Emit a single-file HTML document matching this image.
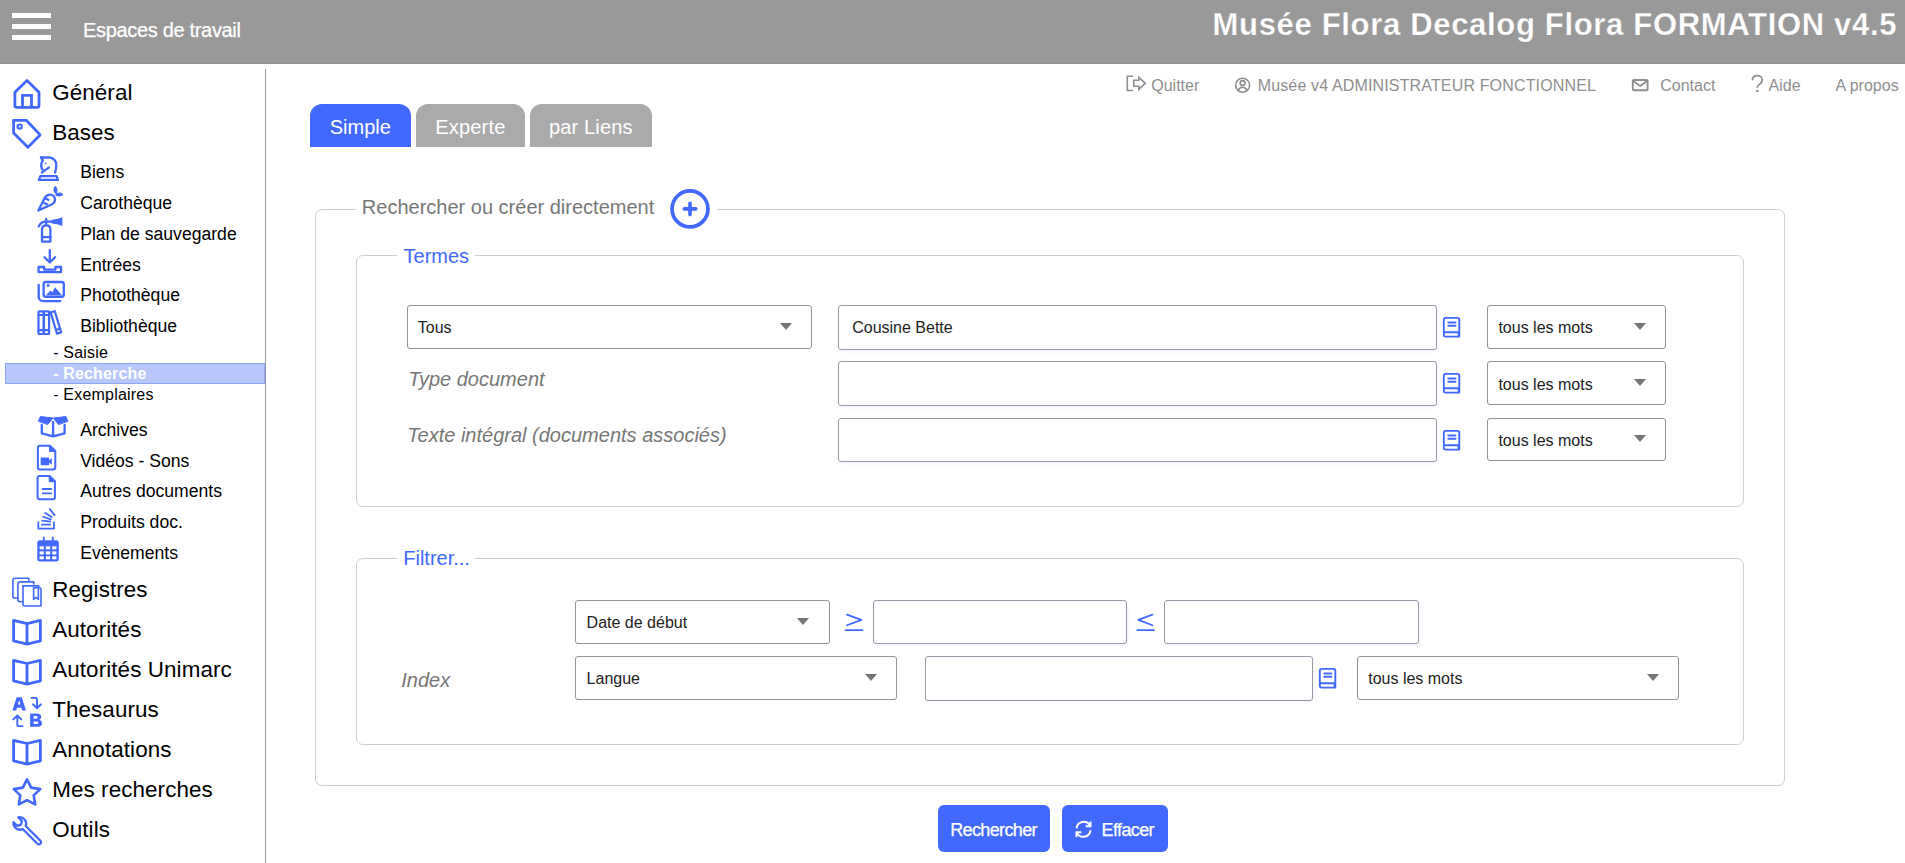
<!DOCTYPE html>
<html><head><meta charset="utf-8"><title>Recherche</title>
<style>
html,body{margin:0;padding:0;background:#fff;width:1905px;height:863px;overflow:hidden}
body{position:relative;font-family:"Liberation Sans",sans-serif}
.t{position:absolute;line-height:1;white-space:nowrap}
svg{position:absolute;left:0;top:0}
</style></head><body>
<div style="position:absolute;left:0px;top:0px;width:1905px;height:64px;box-sizing:border-box;background:#999;border-bottom:1px solid #909090"></div>
<div style="position:absolute;left:12px;top:13px;width:39px;height:5px;box-sizing:border-box;background:#fff"></div>
<div style="position:absolute;left:12px;top:24px;width:39px;height:5px;box-sizing:border-box;background:#fff"></div>
<div style="position:absolute;left:12px;top:35px;width:39px;height:5px;box-sizing:border-box;background:#fff"></div>
<div class="t" style="left:82.96px;top:20.00px;font-size:20px;color:#fff;letter-spacing:-0.32px;-webkit-text-stroke:0.25px #fff">Espaces de travail</div>
<div class="t" style="left:1212.53px;top:9.00px;font-size:31px;color:#fff;font-weight:bold;letter-spacing:0.68px;-webkit-text-stroke:0.25px #999">Musée Flora Decalog Flora FORMATION v4.5</div>
<div style="position:absolute;left:265px;top:69px;width:1px;height:794px;box-sizing:border-box;background:#9a9a9a"></div>
<div style="position:absolute;left:5px;top:363px;width:260px;height:21px;box-sizing:border-box;background:#b8c8fc;border:1px solid #8ba5fb"></div>
<div class="t" style="left:52.20px;top:82.00px;font-size:22.4px;color:#000;letter-spacing:0.1px">Général</div>
<div class="t" style="left:52.20px;top:122.00px;font-size:22.4px;color:#000;letter-spacing:0.1px">Bases</div>
<div class="t" style="left:52.20px;top:579.00px;font-size:22.4px;color:#000;letter-spacing:0.1px">Registres</div>
<div class="t" style="left:52.20px;top:619.00px;font-size:22.4px;color:#000;letter-spacing:0.1px">Autorités</div>
<div class="t" style="left:52.20px;top:659.00px;font-size:22.4px;color:#000;letter-spacing:0.1px">Autorités Unimarc</div>
<div class="t" style="left:52.20px;top:699.00px;font-size:22.4px;color:#000;letter-spacing:0.1px">Thesaurus</div>
<div class="t" style="left:52.20px;top:739.00px;font-size:22.4px;color:#000;letter-spacing:0.1px">Annotations</div>
<div class="t" style="left:52.20px;top:779.00px;font-size:22.4px;color:#000;letter-spacing:0.1px">Mes recherches</div>
<div class="t" style="left:52.20px;top:819.00px;font-size:22.4px;color:#000;letter-spacing:0.1px">Outils</div>
<div class="t" style="left:80.20px;top:164.00px;font-size:17.6px;color:#000;">Biens</div>
<div class="t" style="left:80.20px;top:195.00px;font-size:17.6px;color:#000;">Carothèque</div>
<div class="t" style="left:80.20px;top:226.00px;font-size:17.6px;color:#000;">Plan de sauvegarde</div>
<div class="t" style="left:80.20px;top:257.00px;font-size:17.6px;color:#000;">Entrées</div>
<div class="t" style="left:80.20px;top:287.00px;font-size:17.6px;color:#000;">Photothèque</div>
<div class="t" style="left:80.20px;top:318.00px;font-size:17.6px;color:#000;">Bibliothèque</div>
<div class="t" style="left:80.20px;top:422.00px;font-size:17.6px;color:#000;">Archives</div>
<div class="t" style="left:80.20px;top:453.00px;font-size:17.6px;color:#000;">Vidéos - Sons</div>
<div class="t" style="left:80.20px;top:483.00px;font-size:17.6px;color:#000;">Autres documents</div>
<div class="t" style="left:80.20px;top:514.00px;font-size:17.6px;color:#000;">Produits doc.</div>
<div class="t" style="left:80.20px;top:545.00px;font-size:17.6px;color:#000;">Evènements</div>
<div class="t" style="left:53.20px;top:345.00px;font-size:16px;color:#000;letter-spacing:0.2px">- Saisie</div>
<div class="t" style="left:53.20px;top:366.00px;font-size:16px;color:#fff;font-weight:bold;letter-spacing:0.15px">- Recherche</div>
<div class="t" style="left:53.20px;top:387.00px;font-size:16px;color:#000;letter-spacing:0.2px">- Exemplaires</div>
<div class="t" style="left:1151.24px;top:78.00px;font-size:16px;color:#8f8f8f;">Quitter</div>
<div class="t" style="left:1257.69px;top:78.00px;font-size:16px;color:#8f8f8f;letter-spacing:0.15px">Musée v4 ADMINISTRATEUR FONCTIONNEL</div>
<div class="t" style="left:1660.19px;top:78.00px;font-size:16px;color:#8f8f8f;">Contact</div>
<div class="t" style="left:1768.57px;top:78.00px;font-size:16px;color:#8f8f8f;">Aide</div>
<div class="t" style="left:1835.47px;top:78.00px;font-size:16px;color:#8f8f8f;">A propos</div>
<div style="position:absolute;left:310px;top:104px;width:101px;height:43px;box-sizing:border-box;background:#4169ff;border-radius:12px 12px 0 0"></div>
<div style="position:absolute;left:416px;top:104px;width:109px;height:43px;box-sizing:border-box;background:#aaa;border-radius:12px 12px 0 0"></div>
<div style="position:absolute;left:530px;top:104px;width:122px;height:43px;box-sizing:border-box;background:#aaa;border-radius:12px 12px 0 0"></div>
<div class="t" style="left:329.69px;top:117.00px;font-size:20px;color:#fff;">Simple</div>
<div class="t" style="left:435.16px;top:117.00px;font-size:20px;color:#fff;letter-spacing:0.2px">Experte</div>
<div class="t" style="left:549.01px;top:117.00px;font-size:20px;color:#fff;letter-spacing:0.15px">par Liens</div>
<div style="position:absolute;left:315px;top:209px;width:1470px;height:577px;box-sizing:border-box;border:1px solid #cfcfcf;border-radius:7px;background:transparent"></div>
<div style="position:absolute;left:356px;top:199px;width:7px;height:20px;box-sizing:border-box;background:#fff"></div>
<div style="position:absolute;left:356px;top:199px;width:361px;height:20px;background:#fff"></div>
<div class="t" style="left:361.86px;top:197.00px;font-size:20px;color:#777;">Rechercher ou créer directement</div>
<div style="position:absolute;left:356px;top:255px;width:1388px;height:252px;box-sizing:border-box;border:1px solid #cfcfcf;border-radius:7px;background:transparent"></div>
<div style="position:absolute;left:397px;top:245px;width:78px;height:20px;background:#fff"></div>
<div class="t" style="left:403.55px;top:246.00px;font-size:20px;color:#4169ff;">Termes</div>
<div style="position:absolute;left:356px;top:558px;width:1388px;height:187px;box-sizing:border-box;border:1px solid #cfcfcf;border-radius:7px;background:transparent"></div>
<div style="position:absolute;left:397px;top:548px;width:78px;height:20px;background:#fff"></div>
<div class="t" style="left:403.26px;top:548.00px;font-size:20px;color:#4169ff;">Filtrer...</div>
<div style="position:absolute;left:407px;top:305px;width:405px;height:44px;box-sizing:border-box;border:1px solid #949494;border-radius:3px;background:#fff"></div>
<div class="t" style="left:417.80px;top:320.00px;font-size:16px;color:#222;">Tous</div>
<div style="position:absolute;left:780px;top:322.5px;width:0;height:0;border-left:6px solid transparent;border-right:6px solid transparent;border-top:7px solid #777"></div>
<div style="position:absolute;left:838px;top:305px;width:599px;height:45px;box-sizing:border-box;border:1px solid #9898a6;border-radius:3px;background:#fff;box-shadow:1px 2px 3px rgba(120,120,200,0.08)"></div>
<div class="t" style="left:852.20px;top:320.00px;font-size:16px;color:#222;">Cousine Bette</div>
<div style="position:absolute;left:838px;top:361px;width:599px;height:45px;box-sizing:border-box;border:1px solid #9898a6;border-radius:3px;background:#fff;box-shadow:1px 2px 3px rgba(120,120,200,0.08)"></div>
<div style="position:absolute;left:838px;top:418px;width:599px;height:44px;box-sizing:border-box;border:1px solid #9898a6;border-radius:3px;background:#fff;box-shadow:1px 2px 3px rgba(120,120,200,0.08)"></div>
<div style="position:absolute;left:1487px;top:305px;width:179px;height:44px;box-sizing:border-box;border:1px solid #949494;border-radius:3px;background:#fff"></div>
<div class="t" style="left:1498.40px;top:320.00px;font-size:16px;color:#222;">tous les mots</div>
<div style="position:absolute;left:1634px;top:322.5px;width:0;height:0;border-left:6px solid transparent;border-right:6px solid transparent;border-top:7px solid #777"></div>
<div style="position:absolute;left:1487px;top:361px;width:179px;height:44px;box-sizing:border-box;border:1px solid #949494;border-radius:3px;background:#fff"></div>
<div class="t" style="left:1498.40px;top:377.00px;font-size:16px;color:#222;">tous les mots</div>
<div style="position:absolute;left:1634px;top:378.5px;width:0;height:0;border-left:6px solid transparent;border-right:6px solid transparent;border-top:7px solid #777"></div>
<div style="position:absolute;left:1487px;top:418px;width:179px;height:43px;box-sizing:border-box;border:1px solid #949494;border-radius:3px;background:#fff"></div>
<div class="t" style="left:1498.40px;top:433.00px;font-size:16px;color:#222;">tous les mots</div>
<div style="position:absolute;left:1634px;top:435.0px;width:0;height:0;border-left:6px solid transparent;border-right:6px solid transparent;border-top:7px solid #777"></div>
<div class="t" style="left:408.20px;top:369.00px;font-size:20px;color:#777;font-style:italic;">Type document</div>
<div class="t" style="left:407.20px;top:425.00px;font-size:20px;color:#777;font-style:italic;">Texte intégral (documents associés)</div>
<div style="position:absolute;left:575px;top:600px;width:255px;height:44px;box-sizing:border-box;border:1px solid #949494;border-radius:3px;background:#fff"></div>
<div class="t" style="left:586.60px;top:615.00px;font-size:16px;color:#222;">Date de début</div>
<div style="position:absolute;left:797px;top:617.5px;width:0;height:0;border-left:6px solid transparent;border-right:6px solid transparent;border-top:7px solid #777"></div>
<div style="position:absolute;left:873px;top:600px;width:254px;height:44px;box-sizing:border-box;border:1px solid #9898a6;border-radius:3px;background:#fff;box-shadow:1px 2px 3px rgba(120,120,200,0.08)"></div>
<div style="position:absolute;left:1164px;top:600px;width:255px;height:44px;box-sizing:border-box;border:1px solid #9898a6;border-radius:3px;background:#fff;box-shadow:1px 2px 3px rgba(120,120,200,0.08)"></div>
<div style="position:absolute;left:575px;top:656px;width:322px;height:44px;box-sizing:border-box;border:1px solid #949494;border-radius:3px;background:#fff"></div>
<div class="t" style="left:586.60px;top:671.00px;font-size:16px;color:#222;">Langue</div>
<div style="position:absolute;left:865px;top:673.5px;width:0;height:0;border-left:6px solid transparent;border-right:6px solid transparent;border-top:7px solid #777"></div>
<div style="position:absolute;left:925px;top:656px;width:388px;height:45px;box-sizing:border-box;border:1px solid #9898a6;border-radius:3px;background:#fff;box-shadow:1px 2px 3px rgba(120,120,200,0.08)"></div>
<div style="position:absolute;left:1357px;top:656px;width:322px;height:44px;box-sizing:border-box;border:1px solid #949494;border-radius:3px;background:#fff"></div>
<div class="t" style="left:1368.20px;top:671.00px;font-size:16px;color:#222;">tous les mots</div>
<div style="position:absolute;left:1647px;top:673.5px;width:0;height:0;border-left:6px solid transparent;border-right:6px solid transparent;border-top:7px solid #777"></div>
<div class="t" style="left:401.21px;top:670.00px;font-size:20px;color:#777;font-style:italic;">Index</div>
<div style="position:absolute;left:938px;top:805px;width:112px;height:47px;box-sizing:border-box;background:#4169ff;border-radius:6px"></div>
<div style="position:absolute;left:1062px;top:805px;width:106px;height:47px;box-sizing:border-box;background:#4169ff;border-radius:6px"></div>
<div class="t" style="left:950.22px;top:821.00px;font-size:18px;color:#fff;letter-spacing:-0.64px;-webkit-text-stroke:0.25px #fff">Rechercher</div>
<div class="t" style="left:1101.52px;top:821.00px;font-size:18px;color:#fff;letter-spacing:-0.6px;-webkit-text-stroke:0.25px #fff">Effacer</div>
<svg width="1905" height="863" viewBox="0 0 1905 863" fill="none" stroke="#4169ff" stroke-linecap="round" stroke-linejoin="round">
<!-- house -->
<path d="M14.9 92.3 L27 80.4 L39 92.3 V105.5 Q39 107.4 37 107.4 H16.9 Q14.9 107.4 14.9 105.5 Z" stroke-width="2.8"/>
<path d="M22.5 107 V95.3 H31.5 V107" stroke-width="2.8" stroke-linejoin="miter"/>
<!-- tag -->
<path d="M13.6 120.3 H26.3 L40.1 134.9 L27.9 147.2 L13.6 133 Z" stroke-width="2.8"/>
<circle cx="19.7" cy="126.6" r="2.1" stroke-width="2.2"/>
<!-- knight -->
<g stroke-width="2.35">
<path d="M41 157.5 H49.3 C53.3 157.5 56.3 161 56.3 165.2 C56.3 168 55.6 170.5 55.1 172.6"/>
<path d="M41 157.5 L42.9 160.2 C41.6 161.8 41.2 163.6 41.2 165.6 C41.2 167.4 41.7 168.6 42.6 169.6"/>
<path d="M41.8 172.6 L48.8 167.6"/>
<path d="M40.4 176.1 H56.5 L57.9 179.9 H38.9 Z"/>
</g>
<circle cx="45.7" cy="163.3" r="0.9" fill="#4169ff" stroke="none"/>
<!-- carrot -->
<g stroke-width="2.3">
<path d="M38.4 210.5 L44.8 197.8 C46 195.6 48 194.6 50 194.6 C52.8 194.6 55 196.8 55 199.6 C55 201.6 53.8 203.3 52 204.2 Z"/>
<path d="M45.8 198.6 L48.4 199.8 M44.2 203 L46.8 204.2"/>
</g>
<path d="M55.2 186.8 C53.4 188.8 53.6 191.8 56.2 193.6 C57.2 191 57 188.6 55.2 186.8 Z M62.6 194.4 C60.4 192.6 57.6 192.8 56 195.2 C58.6 196.4 60.8 196.2 62.6 194.4 Z" fill="#4169ff" stroke="#4169ff" stroke-width="1.3"/>
<!-- extinguisher -->
<g stroke-width="2.3">
<path d="M42 241.6 V229.6 C42 227 43.8 225.4 46.2 225.4 C48.6 225.4 50.4 227 50.4 229.6 V241.6 Z"/>
<path d="M42.2 237.2 H50.3"/>
<path d="M46.2 219 V225"/>
<path d="M38.8 226.4 C40.2 223.2 43 221.6 46.2 221.6 H52.5"/>
</g>
<path d="M52.2 220.4 L57 219.6 C58.6 219.4 60.4 218.6 61.8 218 V225.2 C60.4 224.6 58.6 223.8 57 223.6 L52.2 222.8 Z" fill="#4169ff" stroke="#4169ff" stroke-width="1.2"/>
<!-- download tray -->
<g stroke-width="2.3">
<path d="M49.8 250.2 V262.3 M44.5 257.3 L49.8 262.5 L55.1 257.3"/>
<path d="M38.6 267 H44.2 V269.6 H55.4 V267 H61 V272.2 H38.6 Z"/>
</g>
<!-- photo -->
<g stroke-width="2.3">
<rect x="43.6" y="282" width="20.2" height="14.8" rx="2.2"/>
<path d="M38.7 285 V297 C38.7 299.5 40.8 301.1 43.3 301.1 H60.3"/>
</g>
<path d="M45.6 295.6 L50.5 290.4 L52.4 292.3 L55 287.2 L62.2 295.6 Z" fill="#4169ff" stroke="none"/>
<circle cx="48.1" cy="285.5" r="1.4" fill="#4169ff" stroke="none"/>
<!-- books -->
<g stroke-width="2.2">
<rect x="38.5" y="311.4" width="5.3" height="22.6" rx="0.8"/>
<rect x="43.8" y="311.4" width="5.3" height="22.6" rx="0.8"/>
<path d="M38.5 315 H49 M38.5 330.2 H49"/>
<path d="M50.6 312.3 L54.8 311.2 L61.2 332.4 L57 333.6 Z"/>
<path d="M56.4 329.8 L60.3 328.8"/>
</g>
<!-- archives box -->
<path d="M38.5 421 L40.4 416.5 L53 418.1 L48 424.3 Z M67.8 421 L65.9 416.5 L53.3 418.1 L58.3 424.3 Z" fill="#4169ff" stroke="#4169ff" stroke-width="1"/>
<path d="M41.8 425 V433.3 L53.1 436.4 L64.6 433.3 V425 M53.1 422 V436" stroke-width="2.3"/>
<!-- video file -->
<path d="M39.9 445.7 H50 L55.3 451 V467.4 Q55.3 469.4 53.3 469.4 H39.9 Q37.9 469.4 37.9 467.4 V447.7 Q37.9 445.7 39.9 445.7 Z" stroke-width="2"/>
<path d="M49.5 446 V451.5 H55" fill="#4169ff" stroke="#4169ff" stroke-width="1"/>
<path d="M41.2 457.6 H48.6 Q49.1 457.6 49.1 458.1 V464.8 Q49.1 465.3 48.6 465.3 H41.2 Q40.7 465.3 40.7 464.8 V458.1 Q40.7 457.6 41.2 457.6 Z M49 460.5 L51.8 458 V464.8 L49 462.4 Z" fill="#4169ff" stroke="none"/>
<!-- doc file -->
<path d="M39.6 476 H49.6 L54.9 481.3 V497.3 Q54.9 499.3 52.9 499.3 H39.6 Q37.6 499.3 37.6 497.3 V478 Q37.6 476 39.6 476 Z" stroke-width="2"/>
<path d="M49.2 476.3 V481.7 H54.6" fill="#4169ff" stroke="#4169ff" stroke-width="1"/>
<path d="M42.6 489 H51.3 M42.6 493.3 H51.3" stroke-width="1.8"/>
<!-- stack overflow -->
<g stroke-width="1.8" stroke-linecap="butt">
<path d="M38.3 521.6 V528.6 H54 V521.6"/>
<path d="M41.2 524.6 H50.8"/>
<path d="M41.4 520.6 L51 521.6"/>
<path d="M42.3 516.5 L51.4 519.6"/>
<path d="M44.6 512.4 L52.3 517.4"/>
<path d="M49.4 508.5 L54.9 515.6"/>
</g>
<!-- calendar -->
<path d="M39.8 540.3 H56.3 Q58.8 540.3 58.8 542.8 V559.1 Q58.8 561.6 56.3 561.6 H39.8 Q37.3 561.6 37.3 559.1 V542.8 Q37.3 540.3 39.8 540.3 Z" fill="#4169ff" stroke="none"/>
<path d="M43.8 537.5 V542.5 M52.8 537.5 V542.5" stroke-width="1.9"/>
<g fill="#fff" stroke="none">
<rect x="39.6" y="546.3" width="4.2" height="3"/><rect x="45.8" y="546.3" width="4.4" height="3"/><rect x="52.2" y="546.3" width="4.2" height="3"/>
<rect x="39.6" y="551.4" width="4.2" height="3"/><rect x="45.8" y="551.4" width="4.4" height="3"/><rect x="52.2" y="551.4" width="4.2" height="3"/>
<rect x="39.6" y="556.3" width="4.2" height="3"/><rect x="45.8" y="556.3" width="4.4" height="3"/><rect x="52.2" y="556.3" width="4.2" height="3"/>
</g>
<!-- registres -->
<g stroke-width="1.6">
<path d="M28.8 580.4 V578.2 H15 Q12.9 578.2 12.9 580.3 V595.9 Q12.9 598 15 598 H17.8"/>
<path d="M33.8 584 V581.9 H20 Q17.9 581.9 17.9 584 V599.6 Q17.9 601.7 20 601.7 H22.9"/>
<path d="M38.8 587.8 V585.9 H23 V604.3 Q23 606 24.7 606 H41 V589.5 Q41 587.8 39.3 587.8 H33.6 V599.5 L36 597.4 L38.4 599.5 V587.8"/>
</g>
<!-- open books -->
<g stroke-width="2.8">
<path d="M13.6 620.4 L27 623.6 L40.4 620.4 V640.9 L27 644.2 L13.6 640.9 Z M27 623.6 V644"/>
<path d="M13.6 660.3 L27 663.5 L40.4 660.3 V680.8 L27 684.1 L13.6 680.8 Z M27 663.5 V684"/>
<path d="M13.6 740.3 L27 743.5 L40.4 740.3 V760.8 L27 764.1 L13.6 760.8 Z M27 743.5 V764"/>
</g>
<!-- A B -->
<path d="M12.4 710.5 L16.6 697.2 H21.8 L26 710.5 H22.2 L21.4 707.8 H17 L16.2 710.5 Z M17.9 704.6 H20.5 L19.2 700.3 Z" fill="#4169ff" stroke="none"/>
<path d="M30.1 713.4 H36.8 Q41.2 713.4 41.2 716.9 Q41.2 719 39.4 719.8 Q42 720.6 42 723.3 Q42 726.8 37.6 726.8 H30.1 Z M33.6 716.1 V718.8 H36.4 Q37.6 718.8 37.6 717.4 Q37.6 716.1 36.4 716.1 Z M33.6 721.4 V724.1 H37 Q38.3 724.1 38.3 722.7 Q38.3 721.4 37 721.4 Z" fill="#4169ff" stroke="none" fill-rule="evenodd"/>
<g stroke-width="1.9">
<path d="M31.4 697.9 H35.5 Q37 697.9 37 699.4 V708 M33 704.3 L37 708.2 L41 704.3"/>
<path d="M17.3 715.6 V724.4 Q17.3 726.1 19 726.1 H22.6 M13.3 719.4 L17.3 715.5 L21.3 719.4"/>
</g>
<!-- star -->
<path d="M27 779.4 L31.2 787.6 L40.2 789.1 L33.7 795.4 L35.2 804.4 L27 800.2 L18.8 804.4 L20.3 795.4 L13.8 789.1 L22.8 787.6 Z" stroke-width="2.6"/>
<!-- wrench -->
<path d="M13.6 822.2 L17.2 825.8 L20.9 824.7 L21.9 821 L18.3 817.4 A6.4 6.4 0 0 1 25.7 826 L40.4 840.7 A2.1 2.1 0 0 1 37.4 843.7 L22.7 829 A6.4 6.4 0 0 1 13.6 822.2 Z" stroke-width="2.3"/>
<!-- top links icons -->
<g stroke="#8f8f8f" stroke-width="1.6">
<path d="M1132.5 76.3 H1127.3 V90.5 H1132.5"/>
<path d="M1133.8 80.3 H1138.8 V77.3 L1145.3 83.3 L1138.8 89.3 V86.3 H1133.8 Z" stroke-linejoin="miter"/>
<circle cx="1242.6" cy="85.2" r="7"/>
<circle cx="1242.6" cy="83" r="2.4"/>
<path d="M1238.2 90.5 C1239 88.3 1240.6 87.3 1242.6 87.3 C1244.6 87.3 1246.2 88.3 1247 90.5"/>
<rect x="1632.8" y="80" width="14.8" height="10.2" rx="1" stroke-width="1.9"/>
<path d="M1633.2 81 L1640.2 86 L1647.2 81" stroke-width="1.9"/>
</g>
<path d="M1752.4 80.4 C1752.4 77.3 1754.6 75.7 1757.3 75.7 C1760.2 75.7 1762.3 77.5 1762.3 80.1 C1762.3 82.6 1760.6 83.6 1759.1 84.6 C1757.8 85.5 1757.3 86.3 1757.3 87.7" stroke="#8f8f8f" stroke-width="1.7" stroke-linecap="butt"/>
<rect x="1756.2" y="89.9" width="2.3" height="2.1" fill="#8f8f8f" stroke="none"/>
<!-- plus circle -->
<circle cx="690" cy="208.9" r="17.95" stroke-width="3.7"/>
<path d="M690 203.2 V214.6 M684.3 208.9 H695.7" stroke-width="3.6"/>
<!-- book icons near inputs -->
<g stroke-width="1.9">
<path id="bk" stroke-width="1.9" d="M1445.6 317.9 H1457.5 Q1459.3 317.9 1459.3 319.7 V336.6 H1445.6 Q1443.8 336.6 1443.8 334.8 V319.7 Q1443.8 317.9 1445.6 317.9 Z M1443.8 332.3 H1459.3 M1459.3 332.3 Q1457.7 334.4 1459.3 336.6 M1448.3 322.5 H1455.5 M1448.3 325.8 H1455.5"/>
</g>
<use href="#bk" transform="translate(0,56)"/>
<use href="#bk" transform="translate(0,113)"/>
<use href="#bk" transform="translate(-124,351)"/>
<!-- >= <= -->
<g stroke-width="1.9">
<path d="M847 614.6 L861.4 619.9 L847 625.3 M845.7 630.1 H862.5" stroke-width="1.75"/>
<path d="M1152.4 614.6 L1138.3 619.9 L1152.4 625.3 M1137.2 630.1 H1154" stroke-width="1.75"/>
</g>
<!-- refresh -->
<g stroke="#fff" stroke-width="2">
<path d="M1076.6 827.5 A7.3 7.3 0 0 1 1089.9 825.2"/>
<path d="M1090.4 831 A7.3 7.3 0 0 1 1077 833.3"/>
<path d="M1090.5 821.5 V826.3 H1085.7" stroke-linejoin="miter" stroke-linecap="butt"/>
<path d="M1076.5 837 V832.2 H1081.3" stroke-linejoin="miter" stroke-linecap="butt"/>
</g>
</svg>

</body></html>
